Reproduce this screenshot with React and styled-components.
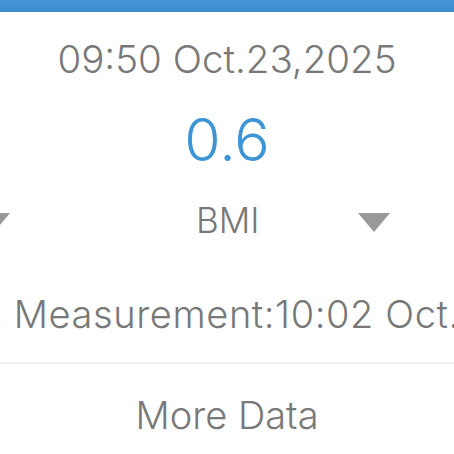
import React from 'react'
import styled, { createGlobalStyle } from 'styled-components'

const Global = createGlobalStyle`
  html, body { margin: 0; padding: 0; background: #fff; }
  body { font-family: Inter, "Liberation Sans", sans-serif; font-weight: 350; }
`

const Screen = styled.div`
  width: 454px;
  height: 454px;
  overflow: hidden;
  background: #fff;
  display: flex;
  flex-direction: column;
`

const TopBar = styled.div`
  height: 12px;
  flex-shrink: 0;
  background: linear-gradient(#4596d8, #3b8bd0);
`

const Line = styled.div`
  text-align: ${(p) => p.align || 'center'};
  white-space: nowrap;
  color: ${(p) => p.color || '#787878'};
  font-size: ${(p) => p.size}px;
  line-height: ${(p) => p.lh}px;
  margin-top: ${(p) => p.top || 0}px;
  letter-spacing: ${(p) => p.ls || 0}px;
`

const Wide = styled.div`
  width: 800px;
  flex-shrink: 0;
  margin-left: -155px;
`

const PickerRow = styled.div`
  display: flex;
  align-items: center;
  height: 50px;
  margin-top: 23px;
  margin-left: -22px;
`

const Caret = styled.span`
  width: 0;
  height: 0;
  flex-shrink: 0;
  margin-top: 4px;
  border-left: 16.5px solid transparent;
  border-right: 16.5px solid transparent;
  border-top: 19px solid #999;
`

const Label = styled.span`
  width: 61px;
  margin: 0 101px 0 186px;
  text-align: center;
  white-space: nowrap;
  font-size: 35px;
  color: #787878;
`

const Divider = styled.div`
  height: 2px;
  flex-shrink: 0;
  background: #efefef;
  margin-top: 18px;
`

export default function App() {
  return (
    <Screen>
      <Global />
      <TopBar />
      <Line size={38.5} lh={60} top={17}>09:50 Oct.23,2025</Line>
      <Line size={59} lh={64} top={19} color="#3e95d6">0.6</Line>
      <PickerRow>
        <Caret />
        <Label>BMI</Label>
        <Caret />
      </PickerRow>
      <Wide>
        <Line size={38} lh={60} top={39} ls={0.6} align="left">Previous Measurement:10:02 Oct.23,2025</Line>
      </Wide>
      <Divider />
      <Line size={38} lh={60} top={21}>More Data</Line>
    </Screen>
  )
}
